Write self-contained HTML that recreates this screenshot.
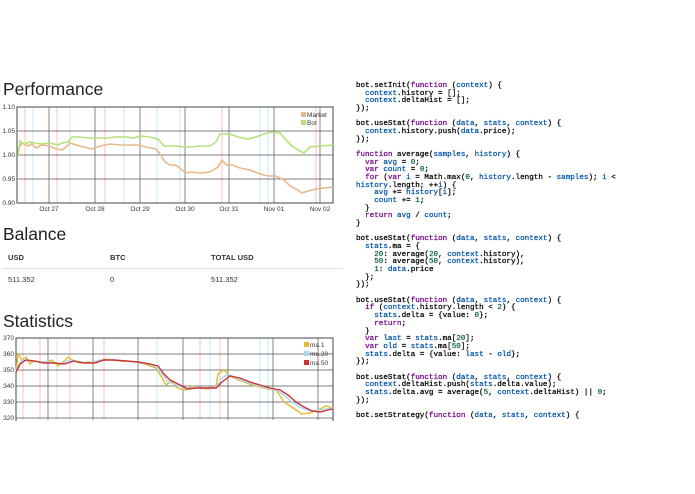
<!DOCTYPE html>
<html><head><meta charset="utf-8"><style>
body{margin:0;width:695px;height:494px;background:#fff;overflow:hidden;position:relative;font-family:"Liberation Sans",sans-serif;color:#333}
h2{position:absolute;margin:0;font-weight:500;font-size:17.5px;left:3px;color:#222}
.t{position:absolute;font-size:7.6px}
.b{font-weight:bold}
pre{position:absolute;left:356px;top:83px;margin:0;font-family:"Liberation Mono",monospace;font-size:7.6px;line-height:7.67px;color:#000;-webkit-text-stroke:0.25px}
.k{color:#708}.v{color:#05a}.n{color:#164}
svg text{font-family:"Liberation Sans",sans-serif;font-size:6.5px;fill:#333}
</style></head><body>
<h2 style="top:79px">Performance</h2>
<h2 style="top:224px">Balance</h2>
<h2 style="top:311px">Statistics</h2>
<div class="t b" style="left:8px;top:253px">USD</div>
<div class="t b" style="left:110px;top:253px">BTC</div>
<div class="t b" style="left:211px;top:253px">TOTAL USD</div>
<div style="position:absolute;left:3px;top:268px;width:340px;height:1px;background:#ddd"></div>
<div class="t" style="left:8px;top:275px">511.352</div>
<div class="t" style="left:110px;top:275px">0</div>
<div class="t" style="left:211px;top:275px">511.352</div>

<svg style="position:absolute;left:0;top:0" width="345" height="494">
<g stroke-width="0.6">
<line x1="25" y1="107" x2="25" y2="203" stroke="#f99"/><line x1="57" y1="107" x2="57" y2="203" stroke="#f99"/><line x1="33" y1="107" x2="33" y2="203" stroke="#9df"/><line x1="70" y1="107" x2="70" y2="203" stroke="#9df"/><line x1="105" y1="107" x2="105" y2="203" stroke="#f99"/><line x1="124" y1="107" x2="124" y2="203" stroke="#9df"/><line x1="157" y1="107" x2="157" y2="203" stroke="#9df"/><line x1="180" y1="107" x2="180" y2="203" stroke="#9df"/><line x1="222" y1="107" x2="222" y2="203" stroke="#f99"/><line x1="260" y1="107" x2="260" y2="203" stroke="#9df"/><line x1="268" y1="107" x2="268" y2="203" stroke="#9df"/><line x1="316" y1="107" x2="316" y2="203" stroke="#f99"/>
</g>
<g stroke="#555" stroke-width="0.7">
<line x1="49" y1="107" x2="49" y2="203"/><line x1="95" y1="107" x2="95" y2="203"/><line x1="140" y1="107" x2="140" y2="203"/><line x1="185" y1="107" x2="185" y2="203"/><line x1="229" y1="107" x2="229" y2="203"/><line x1="274" y1="107" x2="274" y2="203"/><line x1="320" y1="107" x2="320" y2="203"/>
<line x1="17" y1="131" x2="333" y2="131"/><line x1="17" y1="155" x2="333" y2="155"/><line x1="17" y1="179" x2="333" y2="179"/>
</g>
<rect x="17" y="107" width="316" height="96" fill="none" stroke="#444" stroke-width="1"/>
<g text-anchor="end"><text x="15" y="109">1.10</text><text x="15" y="133">1.05</text><text x="15" y="157">1.00</text><text x="15" y="181">0.95</text><text x="15" y="205">0.90</text></g>
<g text-anchor="middle"><text x="49" y="211">Oct 27</text><text x="95" y="211">Oct 28</text><text x="140" y="211">Oct 29</text><text x="185" y="211">Oct 30</text><text x="229" y="211">Oct 31</text><text x="274" y="211">Nov 01</text><text x="320" y="211">Nov 02</text></g>
<polyline fill="none" stroke="#e8b98a" stroke-width="1.6" points="18,150 22,143 28,146 32,144 36,148 42,145 50,146 56,149 62,150 66,147 70,143 76,145 84,147 92,149 100,146 110,144 120,145 130,145 138,145 146,147 156,149 160,154 165,162 170,165 176,165 182,170 186,173 192,172 200,173 210,172 218,167 222,160 226,165 232,165 240,168 250,170 260,174 268,176 276,176 284,180 290,186 296,189 302,193 308,191 316,189 324,188 333,187"/>
<polyline fill="none" stroke="#b6e27a" stroke-width="1.6" points="18,155 20,141 24,144 30,142 40,144 50,143 58,145 62,143 68,142 72,137 80,137 88,138 96,138 106,138 116,137 126,137 134,138 140,136 150,137 158,139 164,146 170,146 176,146 184,147 190,147 200,146 210,146 216,142 220,134 230,134 238,137 248,139 256,137 264,134 272,132 280,133 286,140 292,146 298,150 304,153 310,147 320,146 333,145"/>
<rect x="301" y="112" width="5" height="5" fill="#e8b98a"/><text x="307" y="117">Market</text>
<rect x="301" y="120" width="5" height="5" fill="#b6e27a"/><text x="307" y="125">Bot</text>

<g stroke-width="0.6">
<line x1="23" y1="338" x2="23" y2="420" stroke="#f99"/><line x1="40" y1="338" x2="40" y2="420" stroke="#f99"/><line x1="57" y1="338" x2="57" y2="420" stroke="#9df"/><line x1="70" y1="338" x2="70" y2="420" stroke="#f99"/><line x1="104" y1="338" x2="104" y2="420" stroke="#f99"/><line x1="157" y1="338" x2="157" y2="420" stroke="#9df"/><line x1="200" y1="338" x2="200" y2="420" stroke="#f99"/><line x1="210" y1="338" x2="210" y2="420" stroke="#9df"/><line x1="220" y1="338" x2="220" y2="420" stroke="#f99"/><line x1="260" y1="338" x2="260" y2="420" stroke="#9df"/><line x1="268" y1="338" x2="268" y2="420" stroke="#9df"/>
</g>
<g stroke="#555" stroke-width="0.7">
<line x1="48" y1="338" x2="48" y2="420"/><line x1="93" y1="338" x2="93" y2="420"/><line x1="138" y1="338" x2="138" y2="420"/><line x1="183" y1="338" x2="183" y2="420"/><line x1="228" y1="338" x2="228" y2="420"/><line x1="273" y1="338" x2="273" y2="420"/><line x1="318" y1="338" x2="318" y2="420"/>
<line x1="16" y1="354" x2="333" y2="354"/><line x1="16" y1="370" x2="333" y2="370"/><line x1="16" y1="386" x2="333" y2="386"/><line x1="16" y1="402" x2="333" y2="402"/><line x1="16" y1="418" x2="333" y2="418"/>
</g>
<rect x="16" y="338" width="317" height="90" fill="none" stroke="#444" stroke-width="1"/>
<g text-anchor="end"><text x="14" y="340">370</text><text x="14" y="356">360</text><text x="14" y="372">350</text><text x="14" y="388">340</text><text x="14" y="404">330</text><text x="14" y="420">320</text></g>
<polyline fill="none" stroke="#e8bb30" stroke-width="1.4" points="16,372 18,354 22,360 26,357 30,364 34,361 40,362 46,362 52,360 58,366 62,363 68,357 74,361 80,363 88,362 96,363 104,359 112,360 120,361 128,361 136,362 144,364 150,366 156,368 162,378 166,385 172,381 176,387 180,389 186,390 192,386 200,388 208,389 216,386 218,374 224,370 230,376 236,379 244,382 252,385 260,387 268,389 276,390 280,396 284,402 290,406 296,410 302,414 310,413 318,410 326,406 333,408"/>
<polyline fill="none" stroke="#a8d8f0" stroke-width="1.4" points="16,370 22,360 30,361 40,362 50,362 60,364 70,360 80,362 90,363 100,360 112,360 124,361 136,362 148,364 156,367 162,374 168,382 176,385 186,389 196,387 206,388 216,387 222,378 228,374 236,378 246,382 256,385 266,388 276,390 284,395 292,402 300,407 310,411 320,410 333,408"/>
<polyline fill="none" stroke="#c33" stroke-width="1.4" points="16,372 20,364 26,360 34,361 44,363 54,363 64,364 74,361 84,363 94,363 104,360 114,360 126,361 138,362 150,364 158,366 164,374 170,380 178,384 188,389 196,388 206,388 216,388 222,382 230,376 240,378 250,382 260,385 270,388 280,390 288,395 296,402 304,407 312,411 320,412 328,410 333,409"/>
<rect x="304" y="342" width="5" height="5" fill="#e8bb30"/><text x="310" y="347">ma.1</text>
<rect x="304" y="351" width="5" height="5" fill="#a8d8f0"/><text x="310" y="356">ma.20</text>
<rect x="304" y="360" width="5" height="5" fill="#c33"/><text x="310" y="365">ma.50</text>
<rect x="0" y="421" width="345" height="73" fill="#fff"/>
</svg>

<pre>bot.setInit(<span class="k">function</span> (<span class="v">context</span>) {
  <span class="v">context</span>.history = [];
  <span class="v">context</span>.deltaHist = [];
});

bot.useStat(<span class="k">function</span> (<span class="v">data</span>, <span class="v">stats</span>, <span class="v">context</span>) {
  <span class="v">context</span>.history.push(<span class="v">data</span>.price);
});

<span class="k">function</span> average(<span class="v">samples</span>, <span class="v">history</span>) {
  <span class="k">var</span> <span class="v">avg</span> = <span class="n">0</span>;
  <span class="k">var</span> <span class="v">count</span> = <span class="n">0</span>;
  <span class="k">for</span> (<span class="k">var</span> <span class="v">i</span> = Math.max(<span class="n">0</span>, <span class="v">history</span>.length - <span class="v">samples</span>); <span class="v">i</span> &lt;
<span class="v">history</span>.length; ++<span class="v">i</span>) {
    <span class="v">avg</span> += <span class="v">history</span>[<span class="v">i</span>];
    <span class="v">count</span> += <span class="n">1</span>;
  }
  <span class="k">return</span> <span class="v">avg</span> / <span class="v">count</span>;
}

bot.useStat(<span class="k">function</span> (<span class="v">data</span>, <span class="v">stats</span>, <span class="v">context</span>) {
  <span class="v">stats</span>.ma = {
    <span class="n">20</span>: average(<span class="n">20</span>, <span class="v">context</span>.history),
    <span class="n">50</span>: average(<span class="n">50</span>, <span class="v">context</span>.history),
    <span class="n">1</span>: <span class="v">data</span>.price
  };
});

bot.useStat(<span class="k">function</span> (<span class="v">data</span>, <span class="v">stats</span>, <span class="v">context</span>) {
  <span class="k">if</span> (<span class="v">context</span>.history.length &lt; <span class="n">2</span>) {
    <span class="v">stats</span>.delta = {value: <span class="n">0</span>};
    <span class="k">return</span>;
  }
  <span class="k">var</span> <span class="v">last</span> = <span class="v">stats</span>.ma[<span class="n">20</span>];
  <span class="k">var</span> <span class="v">old</span> = <span class="v">stats</span>.ma[<span class="n">50</span>];
  <span class="v">stats</span>.delta = {value: <span class="v">last</span> - <span class="v">old</span>};
});

bot.useStat(<span class="k">function</span> (<span class="v">data</span>, <span class="v">stats</span>, <span class="v">context</span>) {
  <span class="v">context</span>.deltaHist.push(<span class="v">stats</span>.delta.value);
  <span class="v">stats</span>.delta.avg = average(<span class="n">5</span>, <span class="v">context</span>.deltaHist) || <span class="n">0</span>;
});

bot.setStrategy(<span class="k">function</span> (<span class="v">data</span>, <span class="v">stats</span>, <span class="v">context</span>) {</pre>
<div style="position:absolute;left:345px;top:419px;width:350px;height:75px;background:#fff"></div>
</body></html>
